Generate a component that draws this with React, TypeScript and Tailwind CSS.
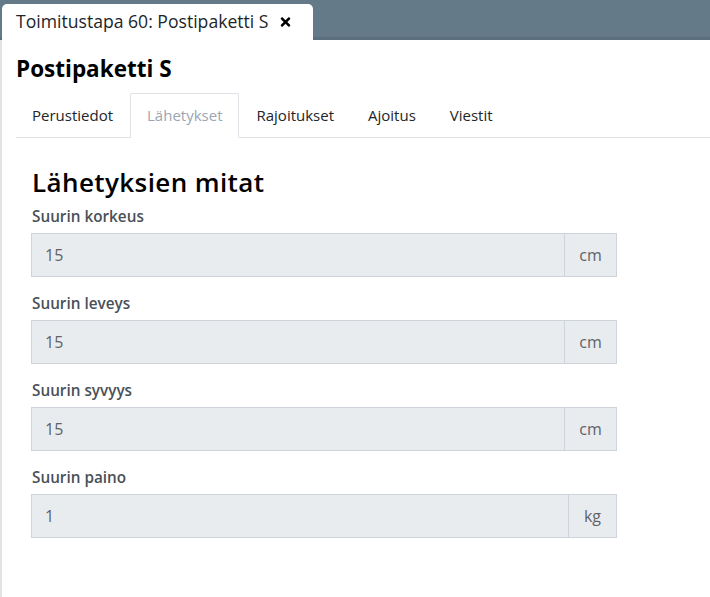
import React from 'react';
import { FaTimes } from 'react-icons/fa';

const fields = [
  { label: 'Suurin korkeus', value: '15', unit: 'cm' },
  { label: 'Suurin leveys', value: '15', unit: 'cm' },
  { label: 'Suurin syvyys', value: '15', unit: 'cm' },
  { label: 'Suurin paino', value: '1', unit: 'kg' },
];

const tabs = ['Perustiedot', 'Lähetykset', 'Rajoitukset', 'Ajoitus', 'Viestit'];

export default function App() {
  return (
    <div
      className="w-[710px] h-[597px] overflow-hidden bg-white text-[#212529]"
      style={{ fontFamily: '"Open Sans", "Noto Sans", sans-serif' }}
    >
      {/* Window tab strip */}
      <div className="h-10 bg-[#647a89] border-b-[3px] border-[#5b6f7e] flex items-end pl-[2px]">
        <div className="-mb-[3px] h-9 w-[311px] bg-white rounded-t-[5px] flex items-center pl-[14px]">
          <span className="text-[17.6px] leading-none text-[#212529]">Toimitustapa 60: Postipaketti S</span>
          <FaTimes className="ml-[10px] w-[13px] h-[14px] text-black" />
        </div>
      </div>

      {/* Page */}
      <div className="h-[557px] border-l-2 border-[#e3e3e3] pl-[14px]">
        <h1 className="pt-[14px] text-[22.5px] leading-[30px] font-bold text-black">Postipaketti S</h1>

        <ul className="mt-[9px] flex border-b border-[#dee2e6] text-[15px]">
          {tabs.map((t, i) => (
            <li
              key={t}
              className={
                (i === 0 ? '-ml-px ' : '') +
                (t === 'Lähetykset'
                  ? '-mb-px h-[45px] px-4 flex items-center border border-b-white border-[#dee2e6] bg-white text-[#9aa6b2] rounded-t-[2px]'
                  : 'h-11 px-4 flex items-center border border-transparent text-[#212529]')
              }
            >
              {t}
            </li>
          ))}
        </ul>

        <div className="pl-[15px] pt-[29px] w-[601px]">
          <h2 className="text-[26px] leading-[30px] tracking-[0.4px] font-semibold text-black pl-px">Lähetyksien mitat</h2>
          <div className="mt-[9px]">
            {fields.map((f) => (
              <div key={f.label} className="mb-4">
                <div className="pl-px text-[15.3px] leading-[21px] font-semibold text-[#495057]">{f.label}</div>
                <div className="mt-[6px] flex h-11">
                  <div className="flex-1 flex items-center bg-[#e9ecef] border border-[#ced4da] pl-[13px] text-[16px] text-[#5f6368]">
                    {f.value}
                  </div>
                  <div
                    className={
                      (f.unit === 'kg' ? 'w-[48px] ' : 'w-[52px] ') +
                      'flex items-center justify-center bg-[#e9ecef] border border-l-0 border-[#ced4da] text-[16px] text-[#5f6368]'
                    }
                  >
                    {f.unit}
                  </div>
                </div>
              </div>
            ))}
          </div>
        </div>
      </div>
    </div>
  );
}
